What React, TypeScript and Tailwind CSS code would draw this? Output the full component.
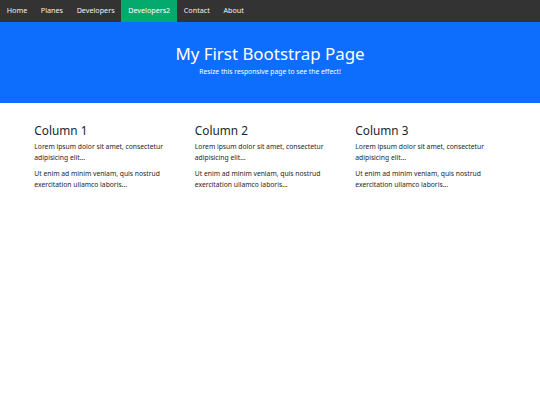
const navItems = ["Home", "Planes", "Developers", "Developers2", "Contact", "About"];

const columns = ["Column 1", "Column 2", "Column 3"];

export default function App() {
  return (
    <div className="min-h-[405px] bg-white font-['Noto_Sans',sans-serif] text-[#212529]">
      <nav className="flex h-[22px] bg-[#333333]">
        {navItems.map((item) => (
          <a
            key={item}
            href="#"
            className={
              "flex items-center px-[6.8px] text-[7.2px] leading-none " +
              (item === "Developers2" ? "bg-[#04aa6d] text-white" : "text-[#f2f2f2]")
            }
          >
            {item}
          </a>
        ))}
      </nav>

      <div className="bg-[#0d6efd] px-[20.3px] pt-[21.6px] pb-[19px] text-center text-white">
        <h1 className="mb-[3.2px] text-[16.9px] font-normal leading-[1.2]">My First Bootstrap Page</h1>
        <p className="mb-[6.76px] text-[6.76px] leading-[1.5]">Resize this responsive page to see the effect!</p>
      </div>

      <div className="mx-auto mt-[20.3px] grid w-[481.5px] grid-cols-3">
        {columns.map((title) => (
          <div key={title} className="px-[5.07px]">
            <h3 className="mb-[5px] text-[11.8px] font-normal leading-[1.2]">{title}</h3>
            <p className="mb-[6.76px] text-[6.76px] leading-[1.5]">
              Lorem ipsum dolor sit amet, consectetur adipisicing elit...
            </p>
            <p className="mb-[6.76px] text-[6.76px] leading-[1.5]">
              Ut enim ad minim veniam, quis nostrud exercitation ullamco laboris...
            </p>
          </div>
        ))}
      </div>
    </div>
  );
}
